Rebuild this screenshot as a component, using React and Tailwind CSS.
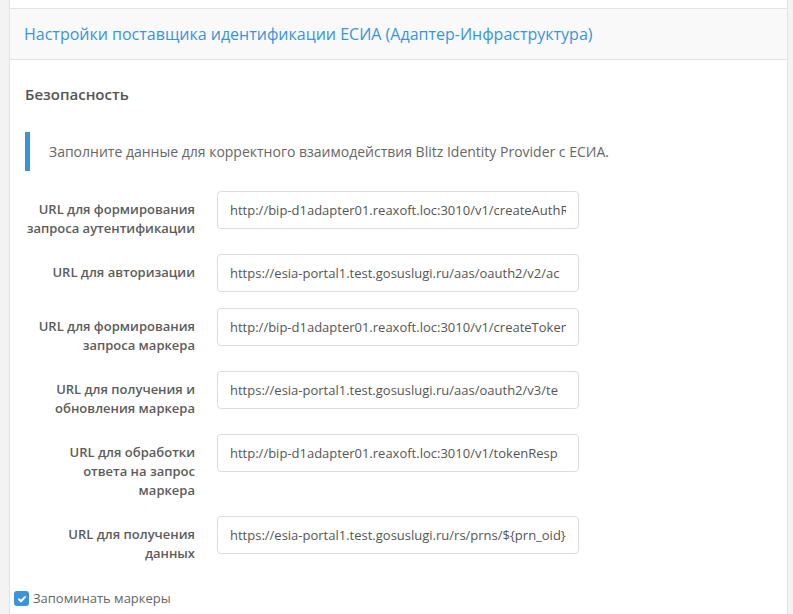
const fields = [
  { label: 'URL для формирования запроса аутентификации', value: 'http://bip-d1adapter01.reaxoft.loc:3010/v1/createAuthRequest' },
  { label: 'URL для авторизации', value: 'https://esia-portal1.test.gosuslugi.ru/aas/oauth2/v2/ac' },
  { label: 'URL для формирования запроса маркера', value: 'http://bip-d1adapter01.reaxoft.loc:3010/v1/createTokenRequest' },
  { label: 'URL для получения и обновления маркера', value: 'https://esia-portal1.test.gosuslugi.ru/aas/oauth2/v3/te' },
  { label: 'URL для обработки ответа на запрос маркера', value: 'http://bip-d1adapter01.reaxoft.loc:3010/v1/tokenResp' },
  { label: 'URL для получения данных', value: 'https://esia-portal1.test.gosuslugi.ru/rs/prns/${prn_oid}' },
];

export default function App() {
  return (
    <div className="h-[614px] bg-[#f3f3f3] pl-[9px] pr-[5px] overflow-hidden" style={{ fontFamily: '"Open Sans", "Noto Sans", sans-serif' }}>
      {/* previous panel bottom */}
      <div className="h-[9px] bg-white border-x border-b border-[#e3e3e3]" />

      <div className="bg-white border-x border-[#e3e3e3] min-h-[605px]">
        {/* Panel header */}
        <div className="h-[51px] bg-[#f9f9f9] border-b border-[#e3e3e3] flex items-center px-[14px]">
          <h2 className="text-[16px] text-[#3b94d9] m-0">
            Настройки поставщика идентификации ЕСИА (Адаптер-Инфраструктура)
          </h2>
        </div>

        <div className="px-[15px] pt-[22px]">
          <h3 className="text-[15px] font-semibold text-[#555] leading-[24px]">Безопасность</h3>

          {/* Info note */}
          <div className="mt-[26px] border-l-[5px] border-[#3b94d9] h-[39px] flex items-center pl-[19px] text-[14px] text-[#666]">
            Заполните данные для корректного взаимодействия Blitz Identity Provider с ЕСИА.
          </div>

          {/* Form rows */}
          <div className="mt-[20px] flex flex-col gap-[16px]">
            {fields.map((f) => (
              <div key={f.label} className="flex items-start gap-[22px]">
                <label className="w-[170px] shrink-0 pt-[9px] text-right text-[13px] font-semibold leading-[19px] text-[#5c5c5c]">
                  {f.label}
                </label>
                <input
                  type="text"
                  readOnly
                  value={f.value}
                  className="w-[362px] h-[38px] px-[12px] rounded-[4px] border border-[#dcdcdc] bg-white text-[13px] text-[#555] outline-none"
                />
              </div>
            ))}
          </div>
        </div>

        {/* Checkbox */}
        <label className="mt-[26px] ml-[4px] flex items-center gap-[4px] text-[13px] leading-[19px] text-[#666]">
          <span className="w-[15px] h-[15px] rounded-[3px] bg-[#3b94d9] flex items-center justify-center">
            <svg width="10" height="10" viewBox="0 0 10 10" fill="none" stroke="white" strokeWidth="2" strokeLinecap="round" strokeLinejoin="round">
              <path d="M2 5.3l2 2L8 3" />
            </svg>
          </span>
          Запоминать маркеры
        </label>
      </div>
    </div>
  );
}
